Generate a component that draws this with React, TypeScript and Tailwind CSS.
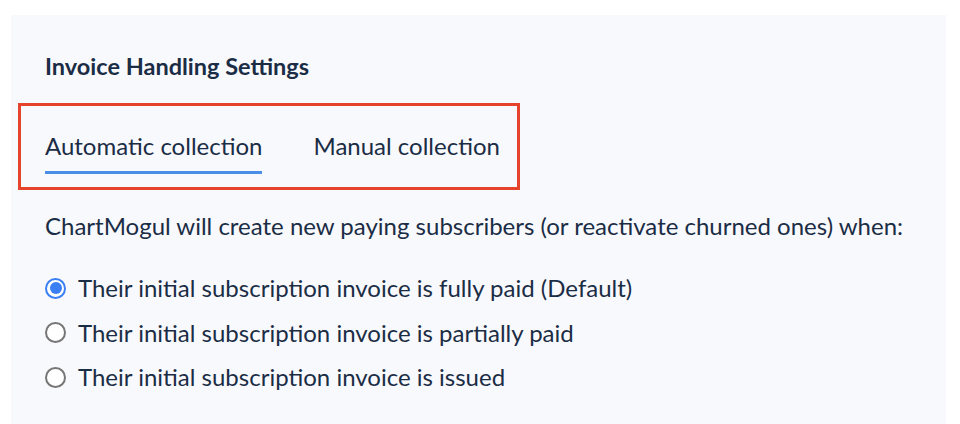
import * as React from "react"

const options = [
  "Their initial subscription invoice is fully paid (Default)",
  "Their initial subscription invoice is partially paid",
  "Their initial subscription invoice is issued",
]

function Radio({ checked }: { checked: boolean }) {
  return checked ? (
    <span className="flex h-[21px] w-[21px] shrink-0 items-center justify-center rounded-full border-2 border-[#3b7ff5] bg-white">
      <span className="h-[12px] w-[12px] rounded-full bg-[#3b7ff5]" />
    </span>
  ) : (
    <span className="h-[21px] w-[21px] shrink-0 rounded-full border-2 border-[#767676] bg-white" />
  )
}

export default function App() {
  const [tab, setTab] = React.useState(0)
  const [selected, setSelected] = React.useState(0)

  return (
    <div
      className="h-[424px] w-[960px] bg-white pl-[11px] pt-[15px] text-[#1b2d45]"
      style={{ fontFamily: "Lato, 'Noto Sans', sans-serif" }}
    >
      <div className="h-[409px] w-[935px] bg-[#f8f9fd] pl-[34px] pt-[36px]">
        <h2 className="text-[23.5px] font-bold leading-[30px]">Invoice Handling Settings</h2>

        <div className="ml-[-27px] mt-[22px] flex h-[87px] w-[502px] items-end gap-[51px] border-[3px] border-[#e5432b] pb-[13px] pl-[24px]">
          {["Automatic collection", "Manual collection"].map((label, i) => (
            <button
              key={label}
              onClick={() => setTab(i)}
              className={
                "whitespace-nowrap border-b-[3px] pb-[10px] text-[24px] leading-[30px] " +
                (tab === i ? "border-[#4a8ee8]" : "border-transparent")
              }
            >
              {label}
            </button>
          ))}
        </div>

        <p className="mt-[21px] text-[24px] leading-[30px]">
          ChartMogul will create new paying subscribers (or reactivate churned ones) when:
        </p>

        <div className="mt-[32px] flex flex-col gap-[14.5px]">
          {options.map((label, i) => (
            <label
              key={label}
              className="flex cursor-pointer items-center gap-[12px] text-[24px] leading-[30px]"
              onClick={() => setSelected(i)}
            >
              <Radio checked={selected === i} />
              <span>{label}</span>
            </label>
          ))}
        </div>
      </div>
    </div>
  )
}
